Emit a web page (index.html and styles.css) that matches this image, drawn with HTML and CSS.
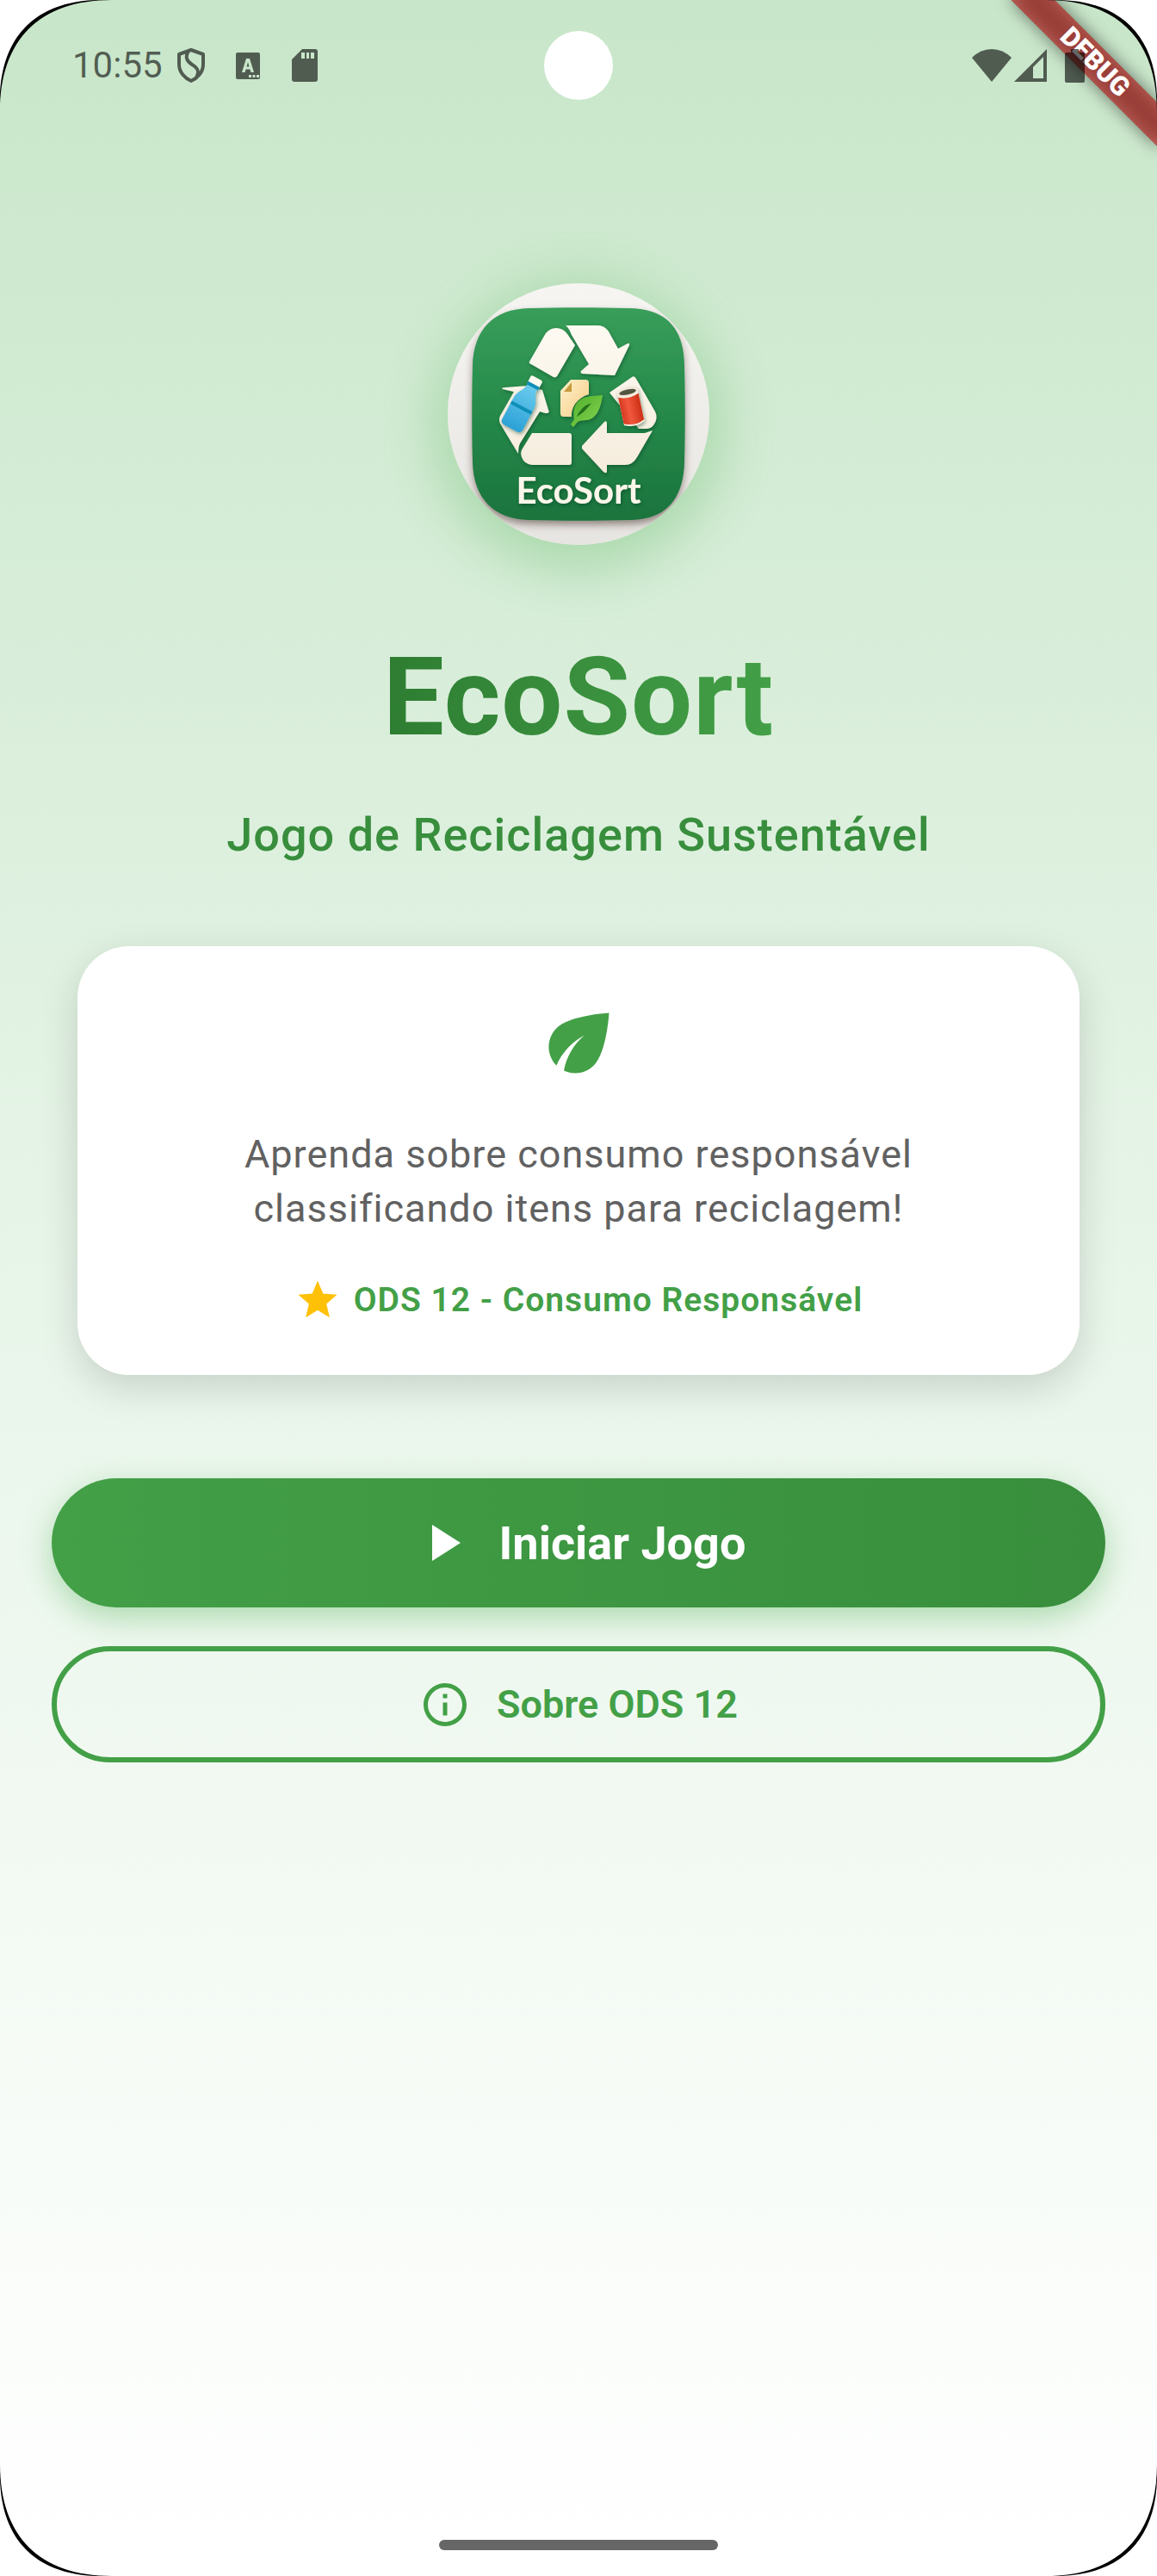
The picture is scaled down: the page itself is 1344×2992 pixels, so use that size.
FILE: index.html
```html
<!DOCTYPE html>
<html lang="pt-BR">
<head>
<meta charset="utf-8">
<meta name="viewport" content="width=device-width, initial-scale=1">
<title>EcoSort</title>
<link rel="stylesheet" href="styles.css">
</head>
<body>
<div class="screen">
  <svg class="corner corner-tl" viewBox="0 0 132 132" aria-hidden="true"><use href="#corner"/></svg>
  <svg class="corner corner-tr" viewBox="0 0 132 132" aria-hidden="true"><use href="#corner"/></svg>
  <svg class="corner corner-bl" viewBox="0 0 132 132" aria-hidden="true"><use href="#corner"/></svg>
  <svg class="corner corner-br" viewBox="0 0 132 132" aria-hidden="true">
    <defs>
      <g id="corner">
        <path fill="#000" d="M0 0H130C46 0 0 46 0 130Z"/>
        <path fill="#fff" d="M0 0H112C42 2 2 42 0 112Z"/>
      </g>
    </defs>
    <use href="#corner"/>
  </svg>

  <div class="banner" aria-hidden="true"><span class="banner-text">DEBUG</span></div>

  <header class="status">
    <div class="status-left">
      <time class="clock">10:55</time>
      <svg class="ic-shield" viewBox="0 0 34 42" aria-hidden="true"><path fill="none" stroke="currentColor" stroke-width="4" stroke-linejoin="round" d="M17 3L31 8V20C31 29 24 36 17 39C10 36 3 29 3 20V8ZM15 3C9 11 12 16 18 20C25 24 27 28 23 35"/></svg>
      <svg class="ic-lang" viewBox="0 0 28 31" aria-hidden="true"><path fill="currentColor" fill-rule="evenodd" d="M2 0H26Q28 0 28 2V29Q28 31 26 31H2Q0 31 0 29V2Q0 0 2 0ZM12 7L7 23H10.500L11.500 19.500H16.500L17.500 23H21L16 7ZM14 11L15.500 16.500H12.500ZM15 26V29H18V26ZM19.500 26V29H22.500V26ZM24 26V29H27V26Z"/></svg>
      <svg class="ic-sd" viewBox="0 0 30 38" aria-hidden="true"><path fill="currentColor" fill-rule="evenodd" d="M12 0H27Q30 0 30 3V35Q30 38 27 38H3Q0 38 0 35V12ZM11 4V11H15V4ZM17 4V11H20V4ZM22 4V11H26V4Z"/></svg>
    </div>
    <div class="status-right">
      <svg class="ic-wifi" viewBox="0 0 46 38" aria-hidden="true"><path fill="currentColor" d="M0 10Q10 0 23 0T46 10L23 38Z"/></svg>
      <svg class="ic-signal" viewBox="0 0 38 38" aria-hidden="true"><path fill="currentColor" fill-rule="evenodd" d="M38 0V38H0ZM34 9L22 21V34H34Z"/></svg>
      <svg class="ic-battery" viewBox="0 0 23 39" aria-hidden="true"><path fill="currentColor" d="M7 0H16V4H21Q23 4 23 6V37Q23 39 21 39H2Q0 39 0 37V6Q0 4 2 4H7Z"/></svg>
    </div>
    <span class="camera"></span>
  </header>

  <main class="content">
    <div class="logo">
      <svg class="logo-art" viewBox="0 0 304 304" role="img" aria-label="Logotipo EcoSort">
        <defs>
          <linearGradient id="disc" x1="0" y1="0" x2="0" y2="1"><stop offset="0" stop-color="#f6f5f2"/><stop offset="1" stop-color="#e7e5e2"/></linearGradient>
          <linearGradient id="tile" x1="0" y1="0" x2="0" y2="1"><stop offset="0" stop-color="#389e5a"/><stop offset=".5" stop-color="#25894a"/><stop offset="1" stop-color="#1b733d"/></linearGradient>
          <linearGradient id="cream" gradientUnits="userSpaceOnUse" x1="0" y1="48" x2="0" y2="220"><stop offset="0" stop-color="#fdfaf2"/><stop offset="1" stop-color="#f5ecdc"/></linearGradient>
          <linearGradient id="water" x1="0" y1="0" x2="0" y2="1"><stop offset="0" stop-color="#6bcbee"/><stop offset="1" stop-color="#2ba1d6"/></linearGradient>
          <linearGradient id="can" x1="0" y1="0" x2="1" y2="0"><stop offset="0" stop-color="#d63a22"/><stop offset=".4" stop-color="#f0583c"/><stop offset="1" stop-color="#cd2f16"/></linearGradient>
          <linearGradient id="paper" x1="0" y1="0" x2="1" y2="1"><stop offset="0" stop-color="#fff0cc"/><stop offset="1" stop-color="#f6cd83"/></linearGradient>
          <linearGradient id="leaf" x1="0" y1="0" x2="1" y2="1"><stop offset="0" stop-color="#4fae29"/><stop offset="1" stop-color="#86d552"/></linearGradient>
          <clipPath id="round"><circle cx="152" cy="152" r="152"/></clipPath>
          <filter id="tileShadow" x="-20%" y="-20%" width="140%" height="140%"><feDropShadow dx="0" dy="5" stdDeviation="4" flood-color="#3a2a20" flood-opacity=".5"/></filter>
          <filter id="soft" x="-20%" y="-20%" width="140%" height="140%"><feDropShadow dx="1" dy="2" stdDeviation="2" flood-color="#063d1b" flood-opacity=".5"/></filter>
        </defs>
        <g clip-path="url(#round)">
          <rect width="304" height="304" fill="url(#disc)"/>
          <path filter="url(#tileShadow)" fill="url(#tile)" d="M94 29C130 28 174 28 210 29C254 29 275 53 275 96C276 130 276 174 275 208C274 250 254 274 214 275C174 276 130 276 94 275C54 274 30 250 29 208C28 174 28 130 29 96C30 53 54 30 94 29Z"/>
        </g>
        <g fill="url(#cream)" filter="url(#soft)">
          <path d="M95 91L114 58Q119 52 126 52Q134 52 139 59L148 72L127 108Q125 110 123 109L97 94Q94 93 95 91Z"/>
          <path d="M137 49H175Q182 49 187 56L198 76L209 70Q212 69 211 72L194 107L156 105Q153 103 156 101L164 94L144 60Q141 52 137 49Z"/>
          <path d="M64 123Q62 121 67 121L93 119L110 124L117 147Q119 151 114 151L107 149L84 186Q82 190 82 198L61 163Q59 158 61 154L77 126Z"/>
          <path d="M188 127L214 109Q217 107 219 111L241 149Q245 157 239 165Q236 169 230 169H222Z"/>
          <path d="M98 174H141Q144 174 144 177V208Q144 211 141 211H98Q89 210 86 202Q84 196 87 192Z"/>
          <path d="M156 189L182 161Q185 159 185 163V174H229L238 171L220 202Q215 211 206 211H185V218Q185 222 181 219L156 192Z"/>
        </g>
        <g filter="url(#soft)">
          <g transform="translate(88 139) rotate(28)">
            <path fill="#fffaf0" d="M-7 -31Q-7 -33 -5 -33H6Q8 -33 8 -31V-23H-7Z"/>
            <path fill="url(#water)" d="M-6 -22H7C6 -12 14 -10 14 0V28Q14 33 9 33H-7Q-13 33 -13 28V0C-13 -10 -6 -12 -6 -22Z"/>
            <path fill="#0d8fb8" d="M-7 -25H8V-21H-7ZM-13 4H14V8H-13Z"/>
          </g>
          <path fill="url(#paper)" d="M143 112H160Q164 112 164 116V129Q154 132 148 140Q143 148 144 155H135Q131 155 131 151V125Z"/>
          <path fill="#c69a3c" d="M144 115V126H135Z"/>
          <path fill="url(#leaf)" d="M180 130C178 145 173 158 161 159Q154 159 151 161L146 167L143 164L147 158C144 140 154 132 168 131Z"/>
          <path fill="#216f1b" d="M167 139Q155 143 150 155Q159 150 167 139Z"/>
          <g transform="translate(213 145) rotate(-12)">
            <path fill="#f6eedf" d="M-12 -19H12V18Q0 24 -12 18Z"/>
            <path fill="url(#can)" d="M-12 -15Q0 -10 12 -15V16Q0 22 -12 16Z"/>
            <ellipse cx="0" cy="-19" rx="12" ry="5" fill="#f3ead9"/>
            <ellipse cx="0" cy="-19" rx="10" ry="3" fill="#525541"/>
          </g>
          <text class="logo-name" x="152" y="256" text-anchor="middle">EcoSort</text>
        </g>
      </svg>
    </div>

    <h1 class="title">EcoSort</h1>
    <p class="subtitle">Jogo de Reciclagem Sustentável</p>

    <section class="card">
      <svg class="card-leaf" viewBox="0 0 24 24" aria-hidden="true"><path fill="currentColor" d="M6.050 8.050c-2.730 2.730-2.730 7.150-.020 9.880 1.470-3.400 4.090-6.240 7.360-7.930-2.770 2.340-4.710 5.610-5.390 9.320 2.600 1.230 5.800.780 7.950-1.370C19.430 14.470 20 4 20 4S9.530 4.570 6.050 8.050z"/></svg>
      <p class="card-text">Aprenda sobre consumo responsável<br>classificando itens para reciclagem!</p>
      <p class="card-tag">
        <svg class="card-star" viewBox="0 0 24 24" aria-hidden="true"><path fill="#ffc107" d="M12 17.270L18.180 21l-1.640-7.030L22 9.240l-7.190-.61L12 2 9.190 8.630 2 9.240l5.460 4.730L5.820 21z"/></svg>
        <span>ODS 12 - Consumo Responsável</span>
      </p>
    </section>

    <div class="actions">
      <button class="btn btn-primary" type="button">
        <svg class="ic-play" viewBox="0 0 24 24" aria-hidden="true"><path fill="currentColor" d="M8 5v14l11-7z"/></svg>
        <span>Iniciar Jogo</span>
      </button>
      <button class="btn btn-outline" type="button">
        <svg class="ic-info" viewBox="0 0 24 24" aria-hidden="true"><path fill="currentColor" d="M11 7h2v2h-2zm0 4h2v6h-2zm1-9C6.480 2 2 6.480 2 12s4.480 10 10 10 10-4.480 10-10S17.520 2 12 2zm0 18c-4.410 0-8-3.590-8-8s3.590-8 8-8 8 3.590 8 8-3.590 8-8 8z"/></svg>
        <span>Sobre ODS 12</span>
      </button>
    </div>
  </main>

  <footer class="nav"><span class="nav-handle"></span></footer>
</div>
</body>
</html>
```

FILE: styles.css
```css
* {
  box-sizing: border-box;
}

body {
  margin: 0;
  font-family: Roboto, "Liberation Sans", sans-serif;
}

.screen {
  position: relative;
  display: flex;
  flex-direction: column;
  min-height: 100vh;
  overflow: hidden;
  background: linear-gradient(#c8e6c9, #e8f5e9 50%, #fff);
}

/* Rounded display corners */
.corner {
  position: absolute;
  z-index: 3;
  width: 132px;
  height: 132px;
}

.corner-tl { top: 0; left: 0; }
.corner-tr { top: 0; right: 0; transform: scaleX(-1); }
.corner-bl { bottom: 0; left: 0; transform: scaleY(-1); }
.corner-br { right: 0; bottom: 0; transform: scale(-1); }

/* Diagonal debug ribbon */
.banner {
  position: absolute;
  z-index: 1;
  top: 84px;
  right: -120px;
  width: 240px;
  height: 36px;
  display: flex;
  align-items: center;
  justify-content: center;
  transform: rotate(45deg);
  transform-origin: 50% -84px;
}

.banner::before {
  content: "";
  position: absolute;
  z-index: -1;
  inset: 0;
  background: rgba(0, 0, 0, 0.5);
  filter: blur(10px);
}

.banner::after {
  content: "";
  position: absolute;
  z-index: -1;
  inset: 0;
  background: rgba(183, 28, 28, 0.63);
}

.banner-text {
  color: #fff;
  font-size: 31px;
  line-height: 36px;
  font-weight: 900;
}

/* Status bar */
.status {
  position: relative;
  z-index: 2;
  display: flex;
  justify-content: space-between;
  height: 152px;
  padding: 0 84px;
  color: rgba(0, 0, 0, 0.6);
}

.status-left,
.status-right {
  display: flex;
  align-items: center;
}

.clock {
  margin-right: 16px;
  font-size: 42px;
  line-height: 48px;
}

.ic-shield { width: 34px; height: 42px; margin-right: 35px; }
.ic-lang { width: 28px; height: 31px; margin-right: 37px; }
.ic-sd { width: 30px; height: 38px; }
.ic-wifi { width: 46px; height: 38px; margin-right: 3px; }
.ic-signal { width: 38px; height: 38px; margin-right: 21px; }
.ic-battery { width: 23px; height: 39px; }

.camera {
  position: absolute;
  top: 36px;
  left: 50%;
  width: 80px;
  height: 80px;
  margin-left: -40px;
  border-radius: 50%;
  background: #fff;
}

/* Content */
.content {
  flex: 1;
  display: flex;
  flex-direction: column;
  align-items: center;
  padding: 177px 60px 0;
}

.logo {
  width: 304px;
  height: 304px;
  border-radius: 50%;
  box-shadow: 0 15px 60px 15px rgba(76, 175, 80, 0.3);
}

.logo-art {
  display: block;
  width: 100%;
  height: 100%;
}

.logo-name {
  fill: #fbf6ea;
  font-family: Lato, sans-serif;
  font-size: 42px;
  font-weight: 700;
}

.title {
  margin: 103px 0 0;
  font-size: 126px;
  line-height: 148px;
  font-weight: 700;
  letter-spacing: 1px;
  color: transparent;
  background: linear-gradient(90deg, #2e7d32, #43a047);
  background-clip: text;
  -webkit-background-clip: text;
}

.subtitle {
  margin: 54px 0 0;
  color: #388e3c;
  font-size: 54px;
  line-height: 64px;
  font-weight: 500;
  letter-spacing: 1px;
}

.card {
  align-self: stretch;
  display: flex;
  flex-direction: column;
  align-items: center;
  margin: 97px 30px 0;
  padding: 60px;
  border-radius: 60px;
  background: #fff;
  box-shadow: 0 15px 45px rgba(0, 0, 0, 0.15);
}

.card-leaf {
  width: 105px;
  height: 105px;
  color: #43a047;
}

.card-text {
  margin: 45px 0 0;
  color: #616161;
  font-size: 45px;
  line-height: 63px;
  letter-spacing: 1px;
  text-align: center;
}

.card-tag {
  display: flex;
  align-items: center;
  gap: 15px;
  margin: 48px 0 0;
  color: #43a047;
  font-size: 39px;
  line-height: 54px;
  font-weight: 600;
  letter-spacing: 1px;
}

.card-star {
  width: 54px;
  height: 54px;
}

.actions {
  align-self: stretch;
  display: flex;
  flex-direction: column;
  gap: 45px;
  margin-top: 120px;
}

.btn {
  display: flex;
  align-items: center;
  justify-content: center;
  border: 0;
  border-radius: 75px;
  background: none;
  color: #43a047;
  font-family: inherit;
  font-weight: 600;
  cursor: pointer;
}

.btn-primary {
  gap: 30px;
  height: 150px;
  background: linear-gradient(90deg, #43a047, #388e3c);
  box-shadow: 0 12px 36px rgba(76, 175, 80, 0.4);
  color: #fff;
  font-size: 54px;
  font-weight: 700;
}

.btn-outline {
  gap: 30px;
  height: 135px;
  border: 6px solid #43a047;
  font-size: 45px;
}

.ic-play { width: 72px; height: 72px; }
.ic-info { width: 60px; height: 60px; }

/* Gesture handle */
.nav {
  display: flex;
  justify-content: center;
  padding-bottom: 30px;
}

.nav-handle {
  width: 324px;
  height: 12px;
  border-radius: 6px;
  background: #666;
}
```
